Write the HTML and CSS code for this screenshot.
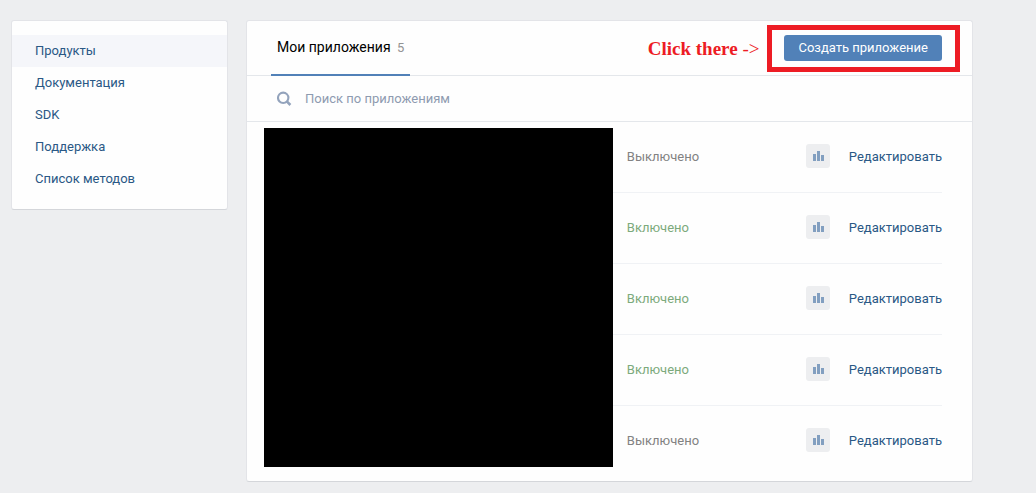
FILE: index.html
```html
<!DOCTYPE html>
<html lang="ru">
<head>
<meta charset="utf-8">
<title>Мои приложения</title>
<link rel="stylesheet" href="styles.css">
</head>
<body>
<svg class="sprite" aria-hidden="true">
  <symbol id="stats" viewBox="0 0 24 24">
    <path fill="currentColor" d="M7 10h3v7H7zM11 7h3v10h-3zM15 11h3v6h-3z"/>
  </symbol>
</svg>
<div class="page">
  <nav class="card sidebar">
    <a class="nav-link active" href="#">Продукты</a>
    <a class="nav-link" href="#">Документация</a>
    <a class="nav-link" href="#">SDK</a>
    <a class="nav-link" href="#">Поддержка</a>
    <a class="nav-link" href="#">Список методов</a>
  </nav>
  <main class="card content">
    <header class="header">
      <a class="tab" href="#">Мои приложения <span class="count">5</span></a>
      <div class="actions">
        <p class="hint"><b>Click there</b> -&gt;</p>
        <div class="target">
          <button class="create" type="button">Создать приложение</button>
        </div>
      </div>
    </header>
    <label class="search">
      <svg class="search-icon" viewBox="0 0 16 16" aria-hidden="true">
        <circle cx="6.2" cy="6.8" r="5.2" fill="none" stroke="currentColor" stroke-width="2.1"/>
        <path d="M9.8 10.4L13.4 14" stroke="currentColor" stroke-width="2.6"/>
      </svg>
      <input class="search-input" type="search" placeholder="Поиск по приложениям" aria-label="Поиск по приложениям">
    </label>
    <div class="apps">
      <div class="row"><span class="status">Выключено</span><button class="stats" type="button" aria-label="Статистика"><svg><use href="#stats"/></svg></button><a class="edit" href="#">Редактировать</a></div>
      <div class="row"><span class="status on">Включено</span><button class="stats" type="button" aria-label="Статистика"><svg><use href="#stats"/></svg></button><a class="edit" href="#">Редактировать</a></div>
      <div class="row"><span class="status on">Включено</span><button class="stats" type="button" aria-label="Статистика"><svg><use href="#stats"/></svg></button><a class="edit" href="#">Редактировать</a></div>
      <div class="row"><span class="status on">Включено</span><button class="stats" type="button" aria-label="Статистика"><svg><use href="#stats"/></svg></button><a class="edit" href="#">Редактировать</a></div>
      <div class="row"><span class="status">Выключено</span><button class="stats" type="button" aria-label="Статистика"><svg><use href="#stats"/></svg></button><a class="edit" href="#">Редактировать</a></div>
      <div class="redaction"></div>
    </div>
  </main>
</div>
</body>
</html>
```
FILE: styles.css
```css
* {
  box-sizing: border-box;
}

body {
  margin: 0;
  background: #edeef0;
  color: #000;
  font: 13px/16px Roboto, "Open Sans", sans-serif;
}

a {
  color: #2a5885;
  text-decoration: none;
}

.sprite {
  display: none;
}

.page {
  display: flex;
  align-items: flex-start;
  gap: 18px;
  padding: 20px 63px 11px 11px;
}

.card {
  background: #fefefe;
  border: 1px solid #e3e4e8;
  border-bottom-color: #d4d6da;
  border-radius: 3px;
}

.sidebar {
  flex: 0 0 217px;
  padding: 14px 0;
}

.nav-link {
  display: block;
  padding: 8px 23px;
}

.nav-link.active {
  background: #f5f6fa;
}

.content {
  flex: 1;
  min-width: 0;
}

.header {
  display: flex;
  justify-content: space-between;
  align-items: stretch;
  height: 55px;
  padding: 0 12px 0 24px;
  border-bottom: 1px solid #e4e7eb;
}

.tab {
  margin-bottom: -1px;
  padding: 18px 6px 0;
  border-bottom: 2px solid #5181b8;
  color: #000;
  font-size: 14px;
}

.count {
  margin-left: 3px;
  color: #939393;
  font-size: 13px;
}

.actions {
  display: flex;
  align-items: flex-start;
  gap: 8px;
  padding-top: 4px;
}

.hint {
  margin: 0;
  padding-top: 14px;
  color: #ed1c24;
  font: 19px/20px "Liberation Serif", serif;
}

.target {
  padding: 5px 13px 6px 12px;
  border: 5px solid #ed1c24;
}

.create {
  display: block;
  height: 26px;
  padding: 0 14px;
  border: 0;
  border-radius: 3px;
  background: #5181b8;
  color: #fff;
  font: 13px/24px Roboto, "Open Sans", sans-serif;
}

.search {
  display: flex;
  align-items: center;
  gap: 12px;
  height: 46px;
  padding: 0 30px;
  border-bottom: 1px solid #e4e7eb;
}

.search-icon {
  width: 16px;
  height: 16px;
  color: #93a3bc;
}

.search-input {
  flex: 1;
  padding: 0;
  border: 0;
  outline: 0;
  background: none;
  font: inherit;
}

.search-input::placeholder {
  color: #8e9bb0;
  opacity: 1;
}

.apps {
  position: relative;
  padding: 0 30px 4px;
}

.row {
  display: flex;
  align-items: center;
  justify-content: flex-end;
  padding: 22px 0 24px;
  border-bottom: 1px solid #f0f2f5;
}

.row:nth-child(5) {
  border-bottom-color: transparent;
}

.status,
.edit {
  padding-top: 2px;
}

.status {
  width: 179px;
  color: #828282;
}

.status.on {
  color: #7caa7c;
}

.stats {
  width: 24px;
  height: 24px;
  margin-right: 19px;
  padding: 0;
  border: 0;
  border-radius: 3px;
  background: #edeef0;
  color: #829fc0;
}

.stats svg {
  display: block;
  width: 24px;
  height: 24px;
}

.redaction {
  position: absolute;
  top: 6px;
  right: 359px;
  bottom: 14px;
  left: 17px;
  background: #000;
}
```
